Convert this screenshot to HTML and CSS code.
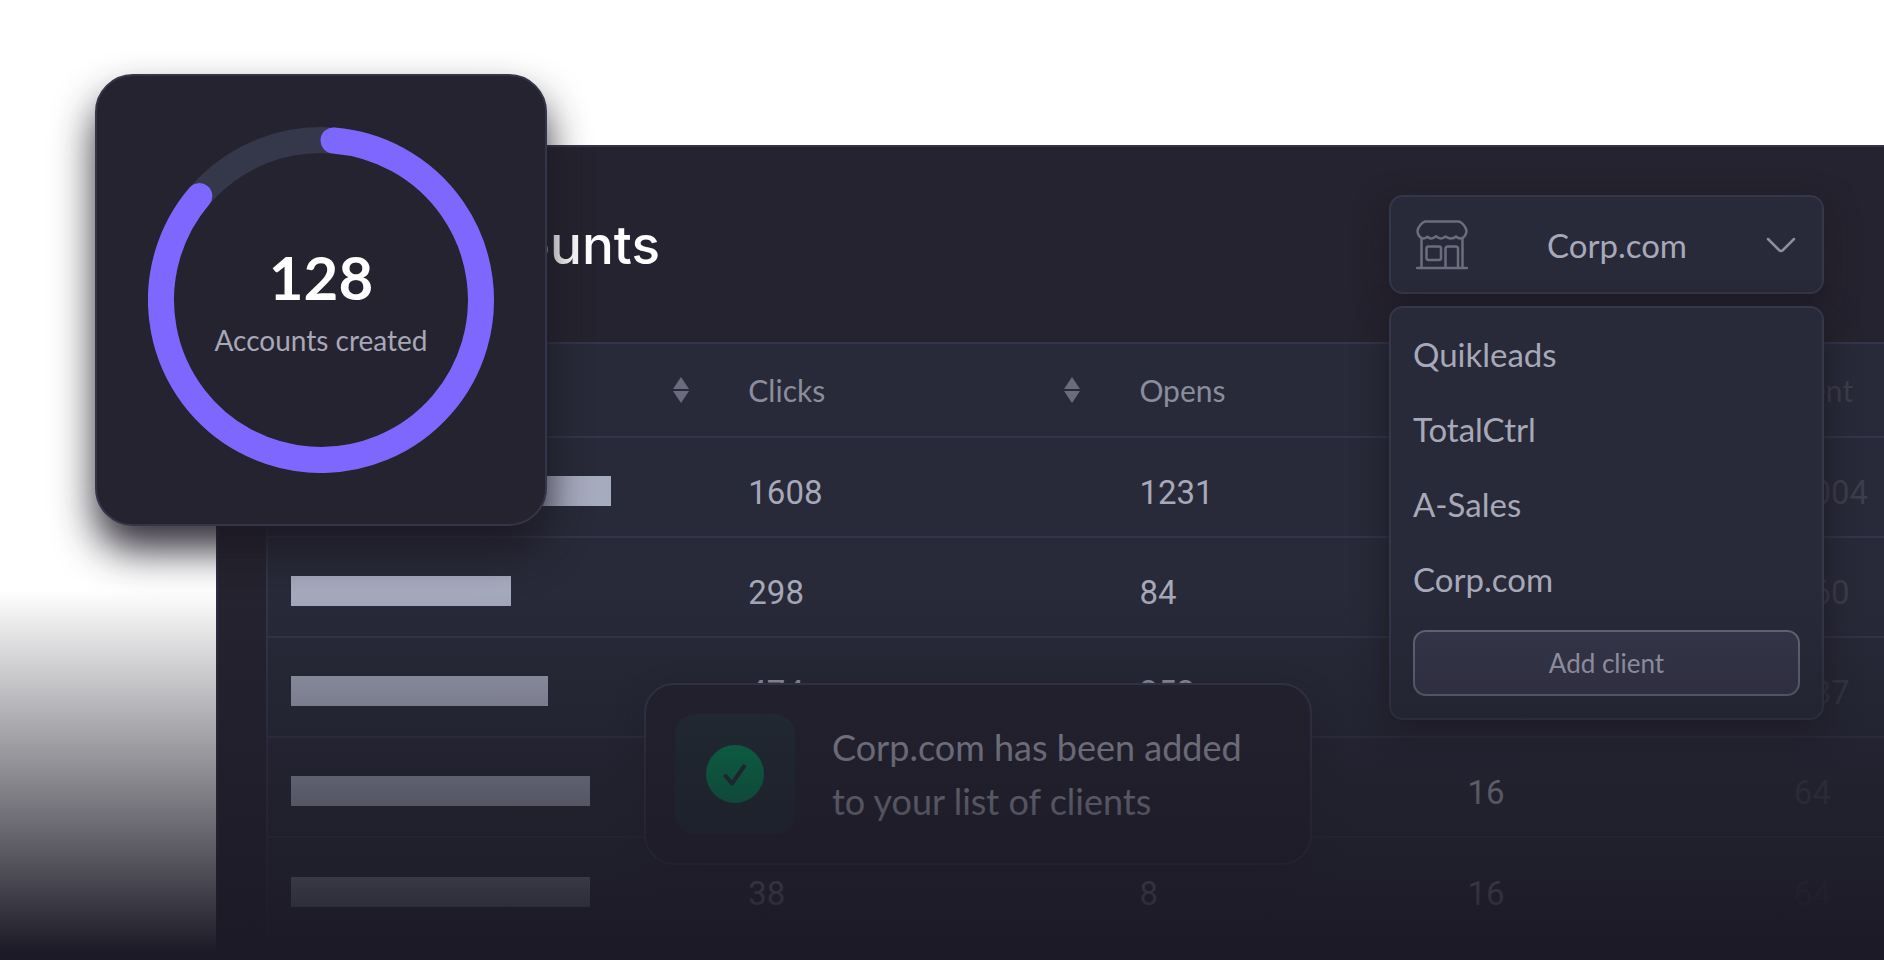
FILE: index.html
```html
<!DOCTYPE html>
<html lang="en">
<head>
    <meta charset="UTF-8">
    <meta name="viewport" content="width=device-width, initial-scale=1.0">
    <title>Client accounts</title>
    <link rel="stylesheet" href="styles.css">
</head>
<body>
    <main class="panel">
        <header class="panel-header">
            <h1>Client accounts</h1>

            <div class="client-picker">
                <div class="select-box">
                    <svg class="store-icon" viewBox="0 0 52 50" aria-hidden="true">
                        <path d="M9 1.5h34c3 1 7 5 7.500 9.500 0 4-3 7.500-6 7.500-2 0-3.500-1-4.500-2-1.500 1.500-3 2-5 2-2.500 0-4-1-5.500-2-1.500 1-2.500 2-4.500 2s-3.500-1-5-2.200c-1.500 1.200-3 2.200-4.500 2.200-2 0-3-1-4-1.800-1 .8-2.500 1.800-4.500 1.800-3 0-5.500-4-5.500-7.500C2 6.500 6 2.500 9 1.500z"/>
                        <path d="M5.500 18v29M46.500 18v29M1 48h50"/>
                        <rect x="10.500" y="26.500" width="14.500" height="13.500" rx="2"/>
                        <path d="M29.500 47V29c0-1.500 1-2.500 2.500-2.500h7.500c1.500 0 2.500 1 2.500 2.500v18"/>
                    </svg>
                    <select id="client" name="client" aria-label="Client">
                        <option>Quikleads</option>
                        <option>TotalCtrl</option>
                        <option>A-Sales</option>
                        <option selected>Corp.com</option>
                    </select>
                    <svg class="chevron" viewBox="0 0 30 16" aria-hidden="true">
                        <path d="M2 2l11 11q2 2 4 0l11-11"/>
                    </svg>
                </div>

                <div class="client-menu">
                    <ul>
                        <li><a href="#quikleads">Quikleads</a></li>
                        <li><a href="#totalctrl">TotalCtrl</a></li>
                        <li><a href="#a-sales">A-Sales</a></li>
                        <li><a href="#corp">Corp.com</a></li>
                    </ul>
                    <button type="button">Add client</button>
                </div>
            </div>
        </header>

        <table class="accounts">
            <thead>
                <tr>
                    <th class="col-name">
                        <div class="th-inner"><span></span>
                            <svg class="sort" viewBox="0 0 16 26" aria-hidden="true"><path d="M8 0l8 12H0zM0 14h16L8 26z"/></svg>
                        </div>
                    </th>
                    <th class="col-clicks">
                        <div class="th-inner">Clicks
                            <svg class="sort" viewBox="0 0 16 26" aria-hidden="true"><path d="M8 0l8 12H0zM0 14h16L8 26z"/></svg>
                        </div>
                    </th>
                    <th class="col-opens">Opens</th>
                    <th class="col-replies"></th>
                    <th class="col-sent">Sent</th>
                </tr>
            </thead>
            <tbody>
                <tr>
                    <td><span class="bar" style="width: 320px"></span></td>
                    <td>1608</td>
                    <td>1231</td>
                    <td></td>
                    <td>1004</td>
                </tr>
                <tr>
                    <td><span class="bar" style="width: 220px"></span></td>
                    <td>298</td>
                    <td>84</td>
                    <td></td>
                    <td>260</td>
                </tr>
                <tr>
                    <td><span class="bar" style="width: 257px"></span></td>
                    <td>474</td>
                    <td>353</td>
                    <td></td>
                    <td>287</td>
                </tr>
                <tr>
                    <td><span class="bar" style="width: 299px"></span></td>
                    <td></td>
                    <td></td>
                    <td>16</td>
                    <td>64</td>
                </tr>
                <tr>
                    <td><span class="bar" style="width: 299px"></span></td>
                    <td>38</td>
                    <td>8</td>
                    <td>16</td>
                    <td>64</td>
                </tr>
            </tbody>
        </table>
    </main>

    <section class="stat-card">
        <svg class="ring" viewBox="0 0 346 346" aria-hidden="true">
            <circle class="ring-track" cx="173" cy="173" r="160"/>
            <path class="ring-value" d="M185.500 13.500A160 160 0 1 1 51.300 69.100"/>
        </svg>
        <div class="stat-text">
            <strong>128</strong>
            <span>Accounts created</span>
        </div>
    </section>

    <div class="toast" role="status">
        <div class="toast-icon">
            <svg viewBox="0 0 58 58" aria-hidden="true">
                <circle cx="29" cy="29" r="29"/>
                <path d="M19.500 31l6.500 7.500 12-17"/>
            </svg>
        </div>
        <p>Corp.com has been added<br>to your list of clients</p>
    </div>

    <div class="fade"></div>
</body>
</html>
```
FILE: styles.css
```css
* {
    box-sizing: border-box;
}

body {
    margin: 0;
    position: relative;
    min-height: 100vh;
    display: flex;
    flex-direction: column;
    overflow: hidden;
    background: #fff;
    color: #a7a8b8;
    font-family: Lato, "Liberation Sans", sans-serif;
    font-size: 33px;
}

.panel {
    flex: 1;
    margin: 145px 0 0 216px;
    padding-left: 48px;
    border-top: 2px solid #33354a;
    border-left: 2px solid #2c2e42;
    background: #25232f;
}

.panel-header {
    display: flex;
    justify-content: space-between;
    align-items: center;
    height: 195px;
    padding-right: 60px;
}

h1 {
    margin: 0;
    color: #fff;
    font-family: Inter, sans-serif;
    font-size: 53px;
    font-weight: 500;
}

/* client picker */
.client-picker {
    position: relative;
    width: 435px;
}

.select-box {
    display: flex;
    align-items: center;
    height: 99px;
    padding: 0 26px 0 25px;
    border: 2px solid #34364a;
    border-radius: 14px;
    background: #282a39;
    box-shadow: 0 12px 32px rgba(28, 22, 32, 0.6);
}

.store-icon {
    width: 52px;
    height: 50px;
    fill: none;
    stroke: #6b6c7e;
    stroke-width: 2.5;
    stroke-linecap: round;
    stroke-linejoin: round;
}

.chevron {
    width: 30px;
    height: 16px;
    fill: none;
    stroke: #8d8e9f;
    stroke-width: 2.5;
    stroke-linecap: round;
}

select {
    flex: 1;
    min-width: 0;
    height: 60px;
    border: 0;
    appearance: none;
    background: transparent;
    color: inherit;
    font: inherit;
    text-align: center;
    text-align-last: center;
}

.client-menu {
    position: absolute;
    top: 111px;
    left: 0;
    right: 0;
    z-index: 2;
    padding: 9px 22px 22px;
    border: 2px solid #34364a;
    border-radius: 14px;
    background: #282a39;
    box-shadow: 0 12px 32px rgba(28, 22, 32, 0.8);
}

.client-menu ul {
    margin: 0 0 13px;
    padding: 0;
    list-style: none;
}

.client-menu a {
    display: block;
    line-height: 75px;
    color: inherit;
    text-decoration: none;
}

.client-menu button {
    display: block;
    width: 100%;
    height: 66px;
    border: 2px solid #68697c;
    border-radius: 13px;
    background: #36374b;
    color: #a7a8b8;
    font-family: inherit;
    font-size: 26px;
    cursor: pointer;
}

/* accounts table */
.accounts {
    width: 100%;
    table-layout: fixed;
    border-collapse: separate;
    border-spacing: 0;
    border-top: 2px solid #33354a;
    border-left: 2px solid #33354a;
    background: #282a39;
}

th, td {
    padding: 0 24px 0 23px;
    border-bottom: 2px solid #33354a;
    text-align: left;
}

th {
    height: 94px;
    color: #8b8c9c;
    font-size: 30px;
    font-weight: 400;
}

td {
    height: 100px;
    padding-top: 12px;
    font-family: Roboto, sans-serif;
    line-height: 40px;
}

td:last-child, th:last-child {
    padding-right: 0;
    color: #3e3d4b;
}

tbody tr:last-child td {
    border-bottom: 0;
}

.th-inner {
    display: flex;
    justify-content: space-between;
    align-items: center;
    padding-right: 12px;
}

.sort {
    width: 16px;
    height: 26px;
    fill: #6b6b7d;
}

.col-name {
    width: 28.3%;
}

.col-clicks {
    width: 24.2%;
}

.col-opens {
    width: 20.3%;
}

.col-replies {
    width: 20.2%;
}

.bar {
    display: block;
    height: 30px;
    margin-bottom: 4px;
    background: #a7abbe;
}

/* circular stat card */
.stat-card {
    position: absolute;
    top: 74px;
    left: 95px;
    display: grid;
    place-items: center;
    width: 452px;
    height: 452px;
    border: 2px solid #33364a;
    border-radius: 38px;
    background: #25232f;
    box-shadow: 0 24px 40px rgba(28, 24, 34, 0.9);
}

.ring, .stat-text {
    grid-area: 1 / 1;
}

.ring {
    width: 346px;
    height: 346px;
}

.ring-track, .ring-value {
    fill: none;
    stroke: #35384a;
    stroke-width: 26;
}

.ring-value {
    stroke: #7e67ff;
    stroke-linecap: round;
}

.stat-text {
    display: flex;
    flex-direction: column;
    align-items: center;
    gap: 14px;
    padding-top: 4px;
}

.stat-text strong {
    color: #fff;
    font-size: 60px;
    font-weight: 700;
    line-height: 62px;
}

.stat-text span {
    font-size: 28px;
    line-height: 36px;
}

/* toast */
.toast {
    position: absolute;
    top: 683px;
    left: 644px;
    display: flex;
    align-items: center;
    gap: 37px;
    width: 668px;
    height: 182px;
    padding: 0 29px;
    border: 2px solid #36384e;
    border-radius: 30px;
    background: #25232f;
    box-shadow: 0 12px 32px rgba(28, 22, 32, 0.3);
}

.toast-icon {
    display: grid;
    place-items: center;
    width: 120px;
    height: 120px;
    border-radius: 20px;
    background: #222f37;
}

.toast-icon svg {
    width: 58px;
    height: 58px;
    fill: #008a54;
}

.toast-icon path {
    fill: none;
    stroke: #222f37;
    stroke-width: 4;
    stroke-linecap: round;
    stroke-linejoin: round;
}

.toast p {
    margin: 0;
    font-size: 36px;
    line-height: 54px;
    white-space: nowrap;
}

/* bottom of the page fades out */
.fade {
    position: absolute;
    left: 0;
    right: 0;
    bottom: 0;
    height: 370px;
    z-index: 5;
    background: linear-gradient(rgba(28, 26, 38, 0), #1c1a26 98%);
    pointer-events: none;
}
```
